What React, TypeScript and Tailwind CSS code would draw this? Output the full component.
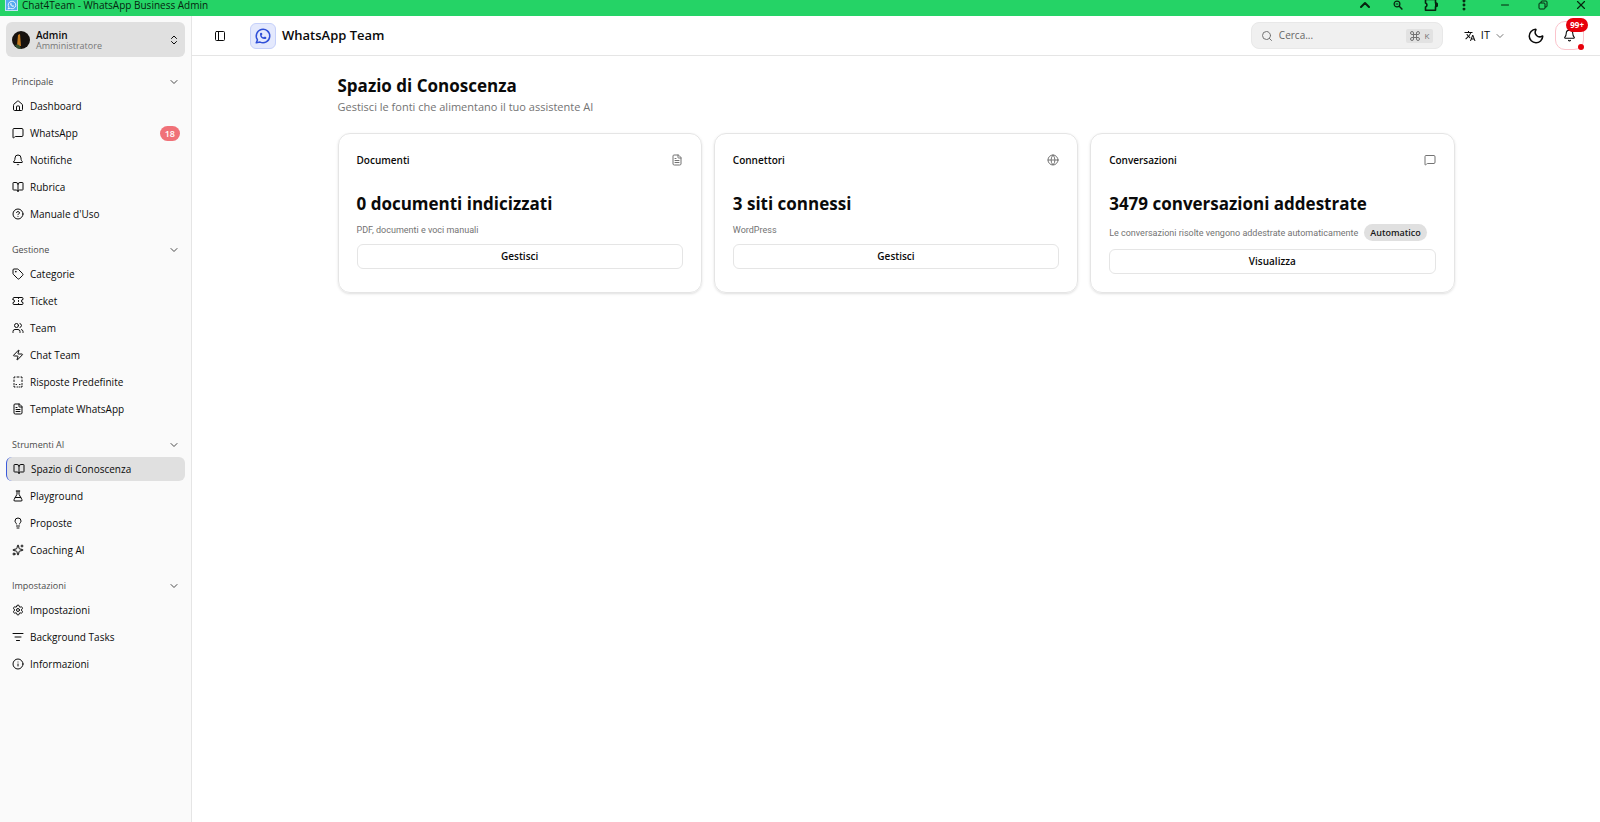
import type { ComponentType, ReactNode } from 'react';
import {
  Bell,
  BookOpen,
  ChevronDown,
  ChevronsUpDown,
  ChevronUp,
  CircleQuestionMark,
  Command,
  EllipsisVertical,
  FileText,
  FlaskConical,
  Globe,
  House,
  Info,
  Lightbulb,
  ListFilter,
  MessageSquare,
  Minus,
  Moon,
  PanelLeft,
  Search,
  Settings,
  Sparkles,
  Tag,
  Ticket,
  Users,
  X,
  Zap,
} from 'lucide-react';
import { MdTranslate } from 'react-icons/md';

type Icon = ComponentType<{ className?: string; strokeWidth?: number }>;

interface NavItem {
  label: string;
  icon: Icon;
  badge?: number;
  active?: boolean;
}

interface NavGroup {
  label: string;
  items: NavItem[];
}

interface IconProps {
  className?: string;
}

function WhatsAppLogo({ className }: IconProps) {
  return (
    <svg
      viewBox="0 0 24 24"
      fill="none"
      stroke="currentColor"
      strokeWidth="2"
      strokeLinecap="round"
      strokeLinejoin="round"
      className={className}
    >
      <path d="M3 21l1.65-3.8a9 9 0 1 1 3.4 2.9L3 21" />
      <path d="M9 10a.5.5 0 0 0 1 0V9a.5.5 0 0 0-1 0v1a5 5 0 0 0 5 5h1a.5.5 0 0 0 0-1h-1a.5.5 0 0 0 0 1" />
    </svg>
  );
}

function DashedTemplate({ className }: IconProps) {
  return (
    <svg
      viewBox="0 0 24 24"
      fill="none"
      stroke="currentColor"
      strokeWidth="2"
      strokeLinecap="round"
      strokeLinejoin="round"
      className={className}
    >
      <path d="M6 2H4v2M10 2h4M18 2h2v2M20 8v3M4 8v3M4 15v2M20 15v2" />
      <path d="M4 20v2h2M10 22h1M14 22h1M18 22h2v-2M8 17h1M15 17h1" />
    </svg>
  );
}

function ExtensionIcon({ className }: IconProps) {
  return (
    <svg viewBox="0 0 14 14" fill="none" stroke="currentColor" strokeWidth="1.6" className={className}>
      <path d="M1.5 1.5h10v3.6a1.7 1.7 0 0 1 0 3.6v3.6h-10V8.9a2.1 2.1 0 0 0 0-4z" strokeLinejoin="round" />
      <path d="M11.8 5.4a1.5 1.5 0 0 1 0 3z" fill="currentColor" />
    </svg>
  );
}

function RestoreIcon({ className }: IconProps) {
  return (
    <svg viewBox="0 0 10 10" fill="none" stroke="currentColor" className={className}>
      <rect x="1" y="3" width="6" height="6" rx="1" />
      <path d="M3 3V2a1 1 0 0 1 1-1h4a1 1 0 0 1 1 1v4a1 1 0 0 1-1 1H7" />
    </svg>
  );
}

function ZoomOutIcon({ className }: IconProps) {
  return (
    <svg viewBox="0 0 10 10" fill="none" stroke="currentColor" className={className}>
      <circle cx="4" cy="4" r="2.9" strokeWidth="1.2" />
      <path d="M6.2 6.2 9.4 9.4" strokeWidth="1.4" />
      <path d="M2.7 4h2.6" />
    </svg>
  );
}

function Avatar({ className }: IconProps) {
  return (
    <svg viewBox="0 0 18 18" className={className}>
      <circle cx="9" cy="9" r="9" fill="#17120f" />
      <path d="M6 4 8 3l1 12H5z" fill="#c47a1e" />
      <path d="M3 14c2-1 4-.5 5 1l1 3c-3 0-5-1-6-4z" fill="#34502f" />
    </svg>
  );
}

const groups: NavGroup[] = [
  {
    label: 'Principale',
    items: [
      { label: 'Dashboard', icon: House },
      { label: 'WhatsApp', icon: MessageSquare, badge: 18 },
      { label: 'Notifiche', icon: Bell },
      { label: 'Rubrica', icon: BookOpen },
      { label: "Manuale d'Uso", icon: CircleQuestionMark },
    ],
  },
  {
    label: 'Gestione',
    items: [
      { label: 'Categorie', icon: Tag },
      { label: 'Ticket', icon: Ticket },
      { label: 'Team', icon: Users },
      { label: 'Chat Team', icon: Zap },
      { label: 'Risposte Predefinite', icon: DashedTemplate },
      { label: 'Template WhatsApp', icon: FileText },
    ],
  },
  {
    label: 'Strumenti AI',
    items: [
      { label: 'Spazio di Conoscenza', icon: BookOpen, active: true },
      { label: 'Playground', icon: FlaskConical },
      { label: 'Proposte', icon: Lightbulb },
      { label: 'Coaching AI', icon: Sparkles },
    ],
  },
  {
    label: 'Impostazioni',
    items: [
      { label: 'Impostazioni', icon: Settings },
      { label: 'Background Tasks', icon: ListFilter },
      { label: 'Informazioni', icon: Info },
    ],
  },
];

function TitleBar() {
  return (
    <div className="flex h-4 shrink-0 items-start justify-between bg-[#25d366] text-[#06240f]">
      <div className="flex items-start gap-1 pl-[5px]">
        <span className="flex h-[11px] w-[13px] items-center justify-center border-x border-b border-[#c4e2f7] bg-[#55a8ee] text-white">
          <WhatsAppLogo className="size-[10px]" />
        </span>
        <span className="text-[10px] leading-[11px]">Chat4Team - WhatsApp Business Admin</span>
      </div>
      <div className="flex h-[10px] items-center">
        <button aria-label="Comprimi" className="flex w-[33px] justify-center">
          <ChevronUp className="size-4" strokeWidth={3} />
        </button>
        <button aria-label="Zoom" className="flex w-[33px] justify-center">
          <ZoomOutIcon className="size-[10px]" />
        </button>
        <button aria-label="Estensioni" className="flex w-[34px] justify-center">
          <ExtensionIcon className="size-[14px]" />
        </button>
        <button aria-label="Altro" className="flex w-8 justify-center">
          <EllipsisVertical className="size-[14px]" strokeWidth={3} />
        </button>
        <button aria-label="Riduci" className="ml-[6px] flex w-[38px] justify-center">
          <Minus className="size-3" />
        </button>
        <button aria-label="Ripristina" className="flex w-[38px] justify-center">
          <RestoreIcon className="size-[10px]" />
        </button>
        <button aria-label="Chiudi" className="flex w-[38px] justify-center">
          <X className="size-[14px]" strokeWidth={2} />
        </button>
      </div>
    </div>
  );
}

function Sidebar() {
  return (
    <aside className="flex w-48 shrink-0 flex-col border-r border-[#e5e5e5] bg-[#fafafa] px-[6px] pt-[6px]">
      <button className="flex h-[35px] items-center gap-[6px] rounded-md bg-[#e0e0e0] pr-[5px] pl-[6px] text-left">
        <Avatar className="size-[18px]" />
        <span className="flex flex-1 flex-col">
          <span className="text-[10px] leading-3 font-semibold">Admin</span>
          <span className="text-[9px] leading-[10px] text-[#777]">Amministratore</span>
        </span>
        <ChevronsUpDown className="size-3" />
      </button>
      <nav className="mt-[13px] flex flex-col gap-3">
        {groups.map((group) => (
          <section key={group.label}>
            <button className="flex h-6 w-full items-center justify-between pr-[5px] pl-[6px] text-[9px] text-[#4a4a4a]">
              {group.label}
              <ChevronDown className="size-3" />
            </button>
            <ul className="flex flex-col gap-[3px]">
              {group.items.map(({ label, icon: ItemIcon, badge, active }) => (
                <li key={label}>
                  <a
                    href="#"
                    className={`flex h-6 items-center gap-[6px] rounded-md pr-[5px] pl-[6px] text-[10px] ${
                      active ? 'border-l border-[#3b5bdb] bg-[#e0e0e0] font-medium' : ''
                    }`}
                  >
                    <ItemIcon className="size-3" />
                    <span className="flex-1">{label}</span>
                    {badge && (
                      <span className="rounded-full bg-[#f07178] px-[5px] text-[9px] leading-[15px] font-semibold text-white">
                        {badge}
                      </span>
                    )}
                  </a>
                </li>
              ))}
            </ul>
          </section>
        ))}
      </nav>
    </aside>
  );
}

function Header() {
  return (
    <header className="flex h-10 items-center justify-between border-b border-[#e5e5e5] pr-4 pl-[22px]">
      <div className="flex items-center">
        <button aria-label="Menu">
          <PanelLeft className="size-3" />
        </button>
        <span className="mr-[6px] ml-6 flex size-[26px] items-center justify-center rounded-md border border-[#c5d0fa] bg-[#e4e9fd] text-[#2f4fd8]">
          <WhatsAppLogo className="size-[18px]" />
        </span>
        <span className="text-[13px] font-semibold">WhatsApp Team</span>
      </div>

      <div className="flex items-center">
        <label className="flex h-[27px] w-48 items-center rounded-lg border border-[#e8e8e8] bg-[#f0f0f0] px-[9px] text-[#737373]">
          <Search className="size-3 shrink-0" />
          <input
            type="text"
            aria-label="Cerca"
            placeholder="Cerca..."
            className="ml-[6px] min-w-0 flex-1 bg-transparent text-[10px] outline-none placeholder:text-[#666]"
          />
          <kbd className="flex h-[14px] w-[27px] items-center justify-center gap-[3px] rounded-xs bg-[#e2e2e2] font-['Open_Sans',sans-serif] text-[8px]">
            <Command className="size-3" />K
          </kbd>
        </label>
        <button className="ml-[21px] flex items-center text-[11px] font-medium">
          <MdTranslate className="size-3" />
          <span className="ml-[5px]">IT</span>
          <ChevronDown className="ml-1 size-3 text-[#777]" />
        </button>
        <button aria-label="Tema" className="ml-[21px]">
          <Moon className="size-[18px]" />
        </button>
        <button
          aria-label="Notifiche"
          className="relative ml-[10px] flex size-[29px] items-center justify-center rounded-[10px] border border-[#fbc4cc]"
        >
          <Bell className="size-[13px]" />
          <span className="absolute -top-1 -right-[5px] rounded-full bg-[#e7000b] px-1 text-[8px] leading-[14px] font-bold text-white">
            99+
          </span>
          <span className="absolute -right-px -bottom-px size-[6px] rounded-full bg-[#e7000b]" />
        </button>
      </div>
    </header>
  );
}

interface CardProps {
  title: string;
  icon: Icon;
  value: string;
  action: string;
  children: ReactNode;
}

function StatCard({ title, icon: CardIcon, value, action, children }: CardProps) {
  return (
    <article className="flex flex-col rounded-xl border border-[#e5e5e5] p-[18px] shadow-sm">
      <div className="flex h-4 items-center justify-between">
        <h2 className="text-[10px] font-semibold">{title}</h2>
        <CardIcon className="size-3 text-[#737373]" />
      </div>
      <p className="mt-6 text-[17px] leading-6 font-bold">{value}</p>
      <div className="mt-2 flex items-center gap-[6px] font-[Roboto,sans-serif] text-[9px] leading-3 text-[#737373]">
        {children}
      </div>
      <button className="mt-2 h-[25px] rounded-md border border-[#e5e5e5] text-[10px] font-semibold">
        {action}
      </button>
    </article>
  );
}

export default function App() {
  return (
    <div className="flex min-h-screen flex-col bg-white font-['Open_Sans',sans-serif] text-[#0a0a0a]">
      <TitleBar />
      <div className="flex flex-1">
        <Sidebar />
        <div className="flex flex-1 flex-col">
          <Header />
          <main className="mx-auto w-full max-w-[1117px] pt-[18px]">
            <h1 className="text-[17px] leading-6 font-bold">Spazio di Conoscenza</h1>
            <p className="text-[11px] leading-[18px] text-[#737373]">
              Gestisci le fonti che alimentano il tuo assistente AI
            </p>
            <div className="mt-[17px] grid grid-cols-3 gap-3">
              <StatCard title="Documenti" icon={FileText} value="0 documenti indicizzati" action="Gestisci">
                <span>PDF, documenti e voci manuali</span>
              </StatCard>
              <StatCard title="Connettori" icon={Globe} value="3 siti connessi" action="Gestisci">
                <span>WordPress</span>
              </StatCard>
              <StatCard
                title="Conversazioni"
                icon={MessageSquare}
                value="3479 conversazioni addestrate"
                action="Visualizza"
              >
                <span>Le conversazioni risolte vengono addestrate automaticamente</span>
                <span className="rounded-full bg-[#e0e0e0] px-[6px] font-['Open_Sans',sans-serif] leading-[17px] font-semibold text-[#171717]">
                  Automatico
                </span>
              </StatCard>
            </div>
          </main>
        </div>
      </div>
    </div>
  );
}
